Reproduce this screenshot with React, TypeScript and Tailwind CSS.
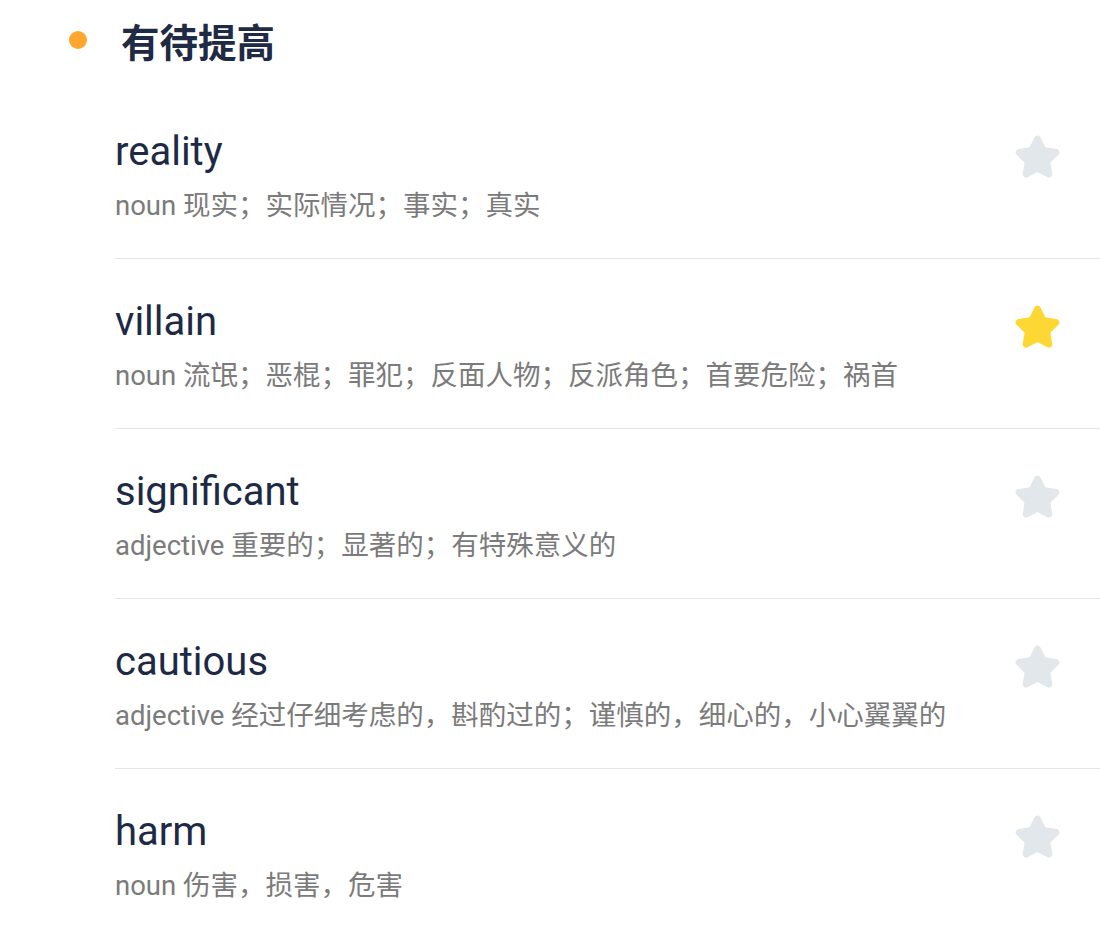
import { Star } from "lucide-react";

interface Word {
  word: string;
  pos: string;
  meaning: string;
  starred: boolean;
}

const words: Word[] = [
  { word: "reality", pos: "noun", meaning: "现实；实际情况；事实；真实", starred: false },
  { word: "villain", pos: "noun", meaning: "流氓；恶棍；罪犯；反面人物；反派角色；首要危险；祸首", starred: true },
  { word: "significant", pos: "adjective", meaning: "重要的；显著的；有特殊意义的", starred: false },
  { word: "cautious", pos: "adjective", meaning: "经过仔细考虑的，斟酌过的；谨慎的，细心的，小心翼翼的", starred: false },
  { word: "harm", pos: "noun", meaning: "伤害，损害，危害", starred: false },
];

export default function App() {
  return (
    <div
      className="w-[1100px] h-[925px] bg-white overflow-hidden"
      style={{ fontFamily: 'Roboto, "Noto Sans CJK SC", sans-serif' }}
    >
      {/* Section header */}
      <div className="h-[89px] flex items-start pt-[16px] pl-[69px]">
        <div className="flex items-center h-[48px]">
          <span className="w-[18px] h-[18px] rounded-full bg-[#ffa62e]" />
          <h2 className="ml-[34px] text-[38.5px] leading-[48px] font-bold text-[#1f2a44]" style={{ fontFamily: '"Noto Sans CJK SC", sans-serif' }}>
            有待提高
          </h2>
        </div>
      </div>

      {/* Word list */}
      <div className="ml-[115px]">
        {words.map((w, i) => (
          <div
            key={w.word}
            className={`flex items-start pt-[39px] pb-[34px] ${i < words.length - 1 ? "border-b border-[#e1e5ea]" : ""}`}
          >
            <div className="flex-1">
              <div className="text-[40px] leading-[48px] text-[#1e2a45]">{w.word}</div>
              <div className="mt-[12px] text-[27.5px] leading-[36px] text-[#7b7b7b]">
                {w.pos} {w.meaning}
              </div>
            </div>
            <div className="mt-[6px] mr-[39px]">
              <Star
                className="w-[47px] h-[47px]"
                strokeWidth={2.4}
                color={w.starred ? "#fdd835" : "#e2e7ec"}
                fill={w.starred ? "#fdd835" : "#e2e7ec"}
              />
            </div>
          </div>
        ))}
      </div>
    </div>
  );
}
